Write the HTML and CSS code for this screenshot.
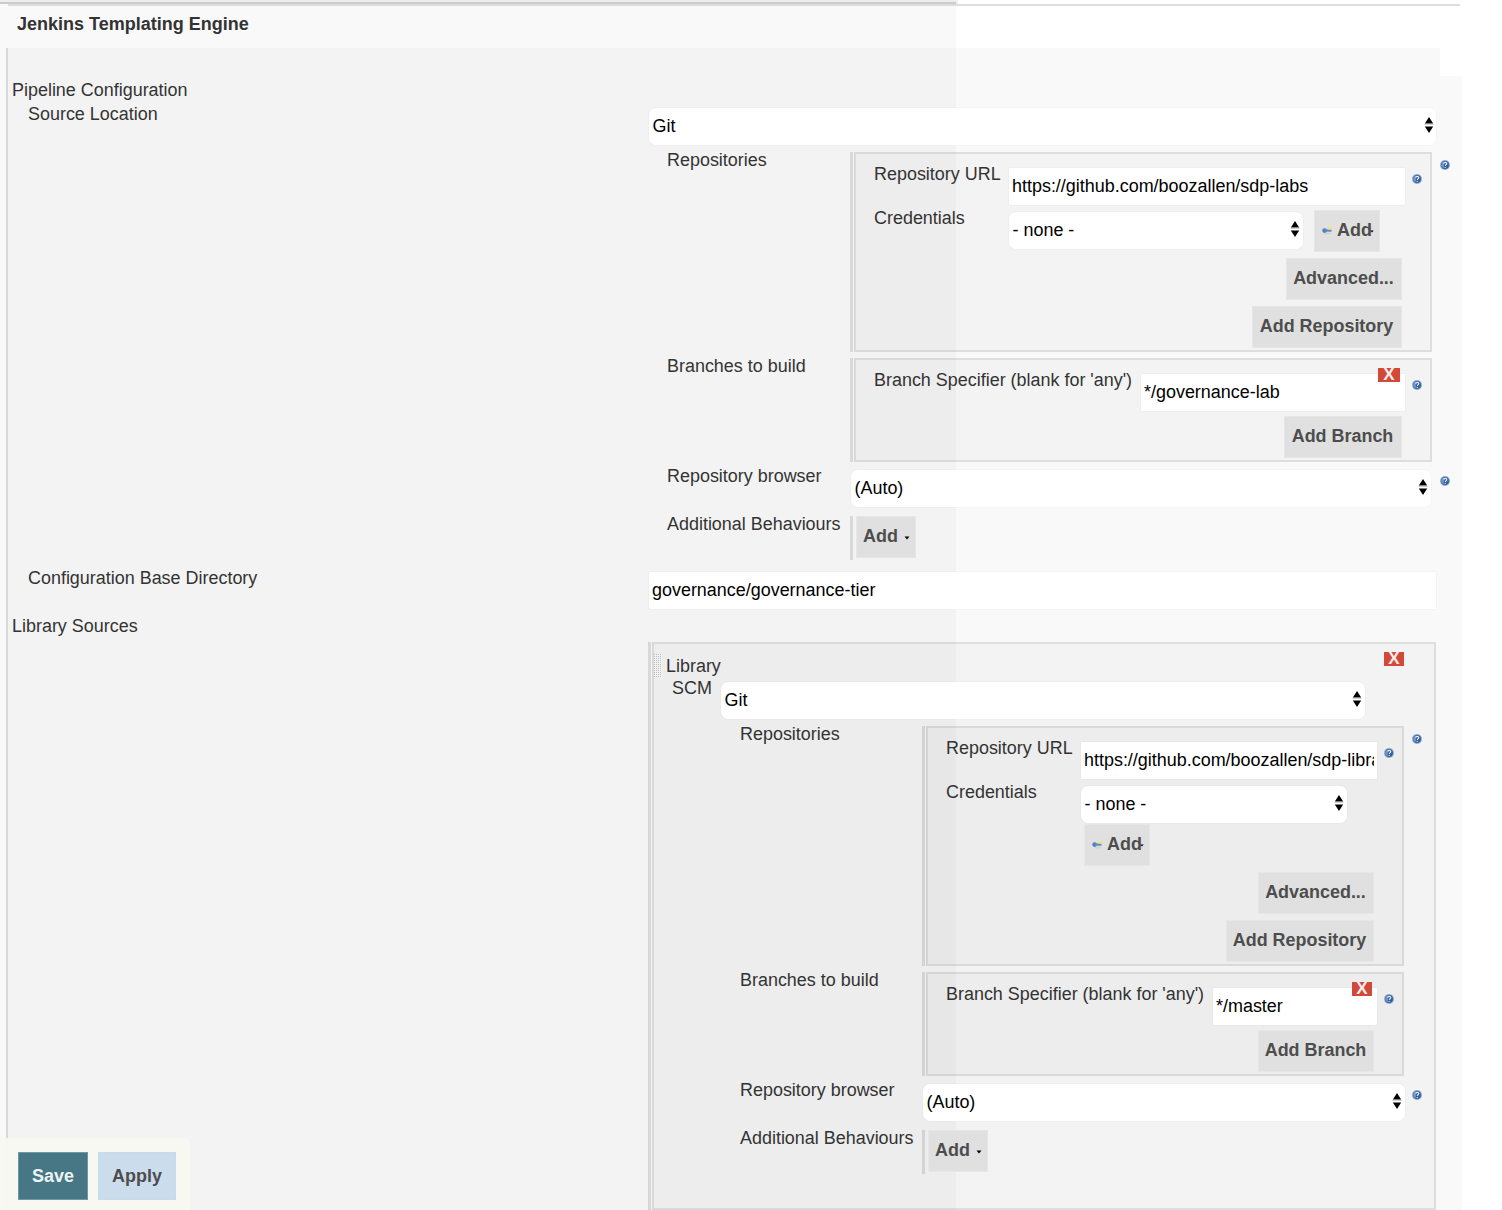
FILE: index.html
```html
<!DOCTYPE html>
<html lang="en">
<head>
<meta charset="utf-8">
<title>Jenkins Templating Engine</title>
<link rel="stylesheet" href="styles.css">
</head>
<body>
<svg width="0" height="0" class="defs">
  <symbol id="arrows" viewBox="0 0 10 18"><path d="M5 1 9.2 7.6H.8ZM5 17 .8 10.4h8.4Z"/><path d="M.5 8.3h9" stroke="#999" stroke-width=".6"/></symbol>
  <symbol id="help" viewBox="0.8 0.8 10.4 10.4"><circle cx="6" cy="6" r="5.2" fill="#8fabd0"/><circle cx="6" cy="6" r="4.1" fill="#33609f"/><path d="M2.2 5a4 4 0 0 1 3-2.8L4.6 9.5A4 4 0 0 1 2.2 5Z" fill="#7496c5"/><path d="M4.7 4.6C4.8 2.8 8 2.9 7.8 4.7 7.7 5.7 6.5 5.7 6.4 7M6.2 8v1.2" fill="none" stroke="#e6eef8" stroke-width="1.2"/></symbol>
  <symbol id="key" viewBox="0 0 12 12"><ellipse cx="6.5" cy="9.6" rx="3.5" ry="1" fill="#d2d2d2"/><circle cx="3.6" cy="6.6" r="2.3" fill="#4f81bd"/><path d="M4 5.5h6.5v2.2H4Z" fill="#5b8bc4"/><ellipse cx="8.9" cy="4.4" rx="2" ry="1.3" fill="#f4e663"/></symbol>
  <symbol id="caret" viewBox="0 0 6 4"><path d="M.5.5h5L3 3.5Z"/></symbol>
</svg>
<div class="page">
  <div class="topbar"></div>
  <div class="rule"></div>
  <h1 class="title">Jenkins Templating Engine</h1>
  <div class="panel-head"></div>
  <main class="panel">
    <div class="heading">Pipeline Configuration</div>
    <div class="row source">
      <div class="label sub">Source Location</div>
      <div class="field">
        <div class="select wide">Git<svg class="arrows"><use href="#arrows"/></svg></div>
        <div class="scm">
          <div class="scm-row repos">
            <div class="label">Repositories</div>
            <div class="group"><div class="box">
              <div class="line"><div class="label">Repository URL</div><div class="input">https://github.com/boozallen/sdp-labs</div><svg class="help"><use href="#help"/></svg></div>
              <div class="line cred"><div class="label">Credentials</div><div class="select">- none -<svg class="arrows"><use href="#arrows"/></svg></div><div class="btn add-key"><svg class="key"><use href="#key"/></svg>Add<svg class="caret"><use href="#caret"/></svg></div></div>
              <div class="btn end adv">Advanced...</div>
              <div class="btn end add-repo">Add Repository</div>
            </div></div>
            <svg class="help"><use href="#help"/></svg>
          </div>
          <div class="scm-row branches">
            <div class="label">Branches to build</div>
            <div class="group"><div class="box">
              <div class="line branch"><div class="label">Branch Specifier (blank for 'any')</div><div class="input">*/governance-lab</div><svg class="help"><use href="#help"/></svg></div>
              <div class="btn end add-branch">Add Branch</div>
              <div class="del">X</div>
            </div></div>
          </div>
          <div class="scm-row browser">
            <div class="label">Repository browser</div>
            <div class="select">(Auto)<svg class="arrows"><use href="#arrows"/></svg></div>
            <svg class="help"><use href="#help"/></svg>
          </div>
          <div class="scm-row behaviours">
            <div class="label">Additional Behaviours</div>
            <div class="group"><div class="btn add-more">Add<svg class="caret"><use href="#caret"/></svg></div></div>
          </div>
        </div>
      </div>
    </div>
    <div class="row base">
      <div class="label sub">Configuration Base Directory</div>
      <div class="field"><div class="input wide">governance/governance-tier</div></div>
    </div>
    <div class="row">
      <div class="label lib">Library Sources</div>
      <div class="group library"><div class="box">
        <div class="lib-head"><svg class="grip" width="8" height="24"><defs><pattern id="dots" width="2" height="2" patternUnits="userSpaceOnUse"><rect width="2" height="2" fill="#f2f2f2"/><rect width="1" height="1" fill="#bbb"/></pattern></defs><rect width="8" height="24" fill="url(#dots)"/></svg><span>Library</span></div>
        <div class="lib-scm"><div class="label">SCM</div><div class="select">Git<svg class="arrows"><use href="#arrows"/></svg></div></div>
        <div class="del">X</div>
        <div class="scm">
          <div class="scm-row repos">
            <div class="label">Repositories</div>
            <div class="group"><div class="box">
              <div class="line"><div class="label">Repository URL</div><div class="input"><span class="clip">https://github.com/boozallen/sdp-libra</span></div><svg class="help"><use href="#help"/></svg></div>
              <div class="line cred"><div class="label">Credentials</div><div class="select">- none -<svg class="arrows"><use href="#arrows"/></svg></div></div>
              <div class="btn add-key"><svg class="key"><use href="#key"/></svg>Add<svg class="caret"><use href="#caret"/></svg></div>
              <div class="btn end adv">Advanced...</div>
              <div class="btn end add-repo">Add Repository</div>
            </div></div>
            <svg class="help"><use href="#help"/></svg>
          </div>
          <div class="scm-row branches">
            <div class="label">Branches to build</div>
            <div class="group"><div class="box">
              <div class="line branch"><div class="label">Branch Specifier (blank for 'any')</div><div class="input">*/master</div><svg class="help"><use href="#help"/></svg></div>
              <div class="btn end add-branch">Add Branch</div>
              <div class="del">X</div>
            </div></div>
          </div>
          <div class="scm-row browser">
            <div class="label">Repository browser</div>
            <div class="select">(Auto)<svg class="arrows"><use href="#arrows"/></svg></div>
            <svg class="help"><use href="#help"/></svg>
          </div>
          <div class="scm-row behaviours">
            <div class="label">Additional Behaviours</div>
            <div class="group"><div class="btn add-more">Add<svg class="caret"><use href="#caret"/></svg></div></div>
          </div>
        </div>
      </div></div>
    </div>
  </main>
  <div class="actions"><div class="action save">Save</div><div class="action apply">Apply</div></div>
</div>
</body>
</html>
```
FILE: styles.css
```css
* { box-sizing: border-box; }
body {
  margin: 0;
  background: #fff;
  color: #333;
  font: 17.95px/24px "Liberation Sans", Helvetica, Arial, sans-serif;
}
svg { display: block; flex: none; }
.defs { position: absolute; }
.page {
  position: relative;
  width: 1502px;
  height: 1210px;
  overflow: hidden;
  background: linear-gradient(#f9f9f9, #f9f9f9) 0 0 / 956px 100% no-repeat;
}
.topbar {
  width: 958px;
  height: 4px;
  background: linear-gradient(#ccc, #ccc) 0 2px / 956px 2px no-repeat #eee;
}
.rule { width: 1452px; height: 2px; margin-left: 8px; background: #ddd; }
.title { margin: 0; height: 42px; padding: 6px 0 0 17px; font-size: 18px; line-height: 24px; }
.panel-head, .panel {
  margin-left: 6px;
  border-left: 2px solid #d9d9d9;
  background: rgba(0, 0, 0, .025);
  background-clip: padding-box;
}
.panel-head { width: 1434px; height: 28px; }
.panel { width: 1456px; height: 1134px; padding-top: 2px; }
.heading { height: 24px; padding-left: 4px; }
.label { white-space: nowrap; }
.row { display: grid; grid-template-columns: 640px 1fr; }
.source { height: 464px; }
.base { height: 48px; }
.sub { padding-left: 20px; }
.lib { padding-left: 4px; }
.field { padding-top: 5px; }

.select, .input {
  display: flex;
  align-items: center;
  justify-content: space-between;
  height: 39px;
  padding: 0 4px 2px 3.5px;
  border: 1px solid rgba(0, 0, 0, .02);
  background: #fff;
  background-clip: padding-box;
  color: #000;
  white-space: nowrap;
}
.select { border-radius: 8px; }
.input { padding: 0 3px 2px; border-radius: 2px; }
.wide { width: 789px; }
.arrows { width: 10px; height: 18px; margin-right: -1px; margin-top: -1px; }
.wide .arrows { margin-right: -2px; }
.clip { overflow: hidden; }

.scm { padding: 2px 0 0 19px; }
.scm-row { display: grid; grid-template-columns: 183px 582px auto; align-items: start; }
.scm-row.repos { height: 206px; }
.scm-row.branches { height: 110px; }
.scm-row.browser { height: 48px; }
.scm-row > .help { margin: 12px 0 0 8px; }
.browser > .select { margin-top: 5px; }
.help { width: 10px; height: 10px; }
.group { margin-top: 4px; padding-left: 4px; background: linear-gradient(rgba(0,0,0,.11), rgba(0,0,0,.11)) 0 0 / 3px 100% no-repeat; }
.box {
  position: relative;
  display: flex;
  flex-direction: column;
  padding: 8px 28px 0 18px;
  border: 2px solid rgba(0, 0, 0, .105);
  background: rgba(0, 0, 0, .025);
  background-clip: padding-box;
}
.repos .box { height: 200px; }
.branches .box { height: 104px; }
.line { display: flex; align-items: flex-start; width: 560px; height: 44px; }
.line .label { width: 134px; flex: none; }
.line .input { width: 398px; margin-top: 5px; flex: none; }
.line .help { margin: 12px 0 0 6px; }
.cred { height: 52px; }
.cred .select { width: 296px; margin-top: 5px; }
.branch { height: 48px; }
.branch .label { width: 266px; }
.branch .input { width: 266px; }

.btn {
  display: flex;
  align-items: center;
  justify-content: center;
  height: 42px;
  flex: none;
  padding-bottom: 2px;
  border: 1px solid #e6e6e6;
  background: #e0e0e0;
  color: #4d4d4d;
  font-weight: bold;
  white-space: nowrap;
}
.end { align-self: flex-end; padding-right: 1px; }
.adv { width: 116px; margin-bottom: 6px; }
.add-repo { width: 150px; }
.add-branch { width: 118px; }
.add-key { width: 66px; margin: 4px 0 0 10px; justify-content: flex-start; padding-left: 6px; }
.key { width: 12px; height: 12px; margin-right: 4px; }
.caret { width: 6px; height: 4px; fill: #000; }
.add-key .caret { width: 4px; height: 3px; margin-left: -2px; margin-top: 2px; }
.behaviours .group { height: 44px; padding-left: 6px; }
.add-more { width: 60px; padding-left: 1px; }
.add-more .caret { margin: 3px 0 0 6px; }
.del {
  position: absolute;
  top: 8px;
  right: 30px;
  width: 22px;
  height: 14px;
  background: #d24939;
  color: #f5eeee;
  font-size: 17px;
  font-weight: bold;
  line-height: 13px;
  text-align: center;
}

.library { width: 788px; margin-top: 28px; }
.library > .box { height: 568px; padding: 10px 0 0; }
.library > .box > .del { top: 8px; right: 30px; width: 20px; }
.lib-head { display: flex; height: 24px; }
.lib-head span { margin-left: 4px; }
.lib-scm { display: flex; height: 42px; padding-left: 18px; }
.lib-scm .label { width: 48px; margin-top: -2px; flex: none; }
.lib-scm .select { width: 646px; margin-top: 3px; }
.library .scm { padding: 2px 0 0 86px; }
.library .scm-row { grid-template-columns: 182px 482px auto; }
.library .scm-row.repos { height: 246px; }
.library .repos .box { height: 240px; }
.library .scm .box { padding-right: 28px; }
.library .line .input { width: 298px; }
.library .branch .input { width: 166px; }
.library .cred { height: 44px; }
.library .cred .select { width: 268px; }
.library .add-key { margin: 0 0 6px 138px; }
.library .add-repo { width: 148px; }
.library .add-branch { width: 116px; }
.library .scm .del { width: 20px; }
.library .browser .select { width: 484px; }
.library .browser .help { margin-left: 8px; }

.actions {
  position: absolute;
  left: 0;
  bottom: 0;
  display: flex;
  gap: 10px;
  width: 190px;
  height: 72px;
  padding: 14px 0 0 18px;
  border-top-right-radius: 6px;
  background: rgba(245, 248, 240, .95);
}
.action {
  height: 48px;
  border: 1px solid #6d98a3;
  font-weight: bold;
  line-height: 46px;
  text-align: center;
}
.save { width: 70px; background: #477785; color: #eef3f4; }
.apply { width: 78px; border-color: #c6dcea; background: #cbdced; color: #4d4d4d; }
```
